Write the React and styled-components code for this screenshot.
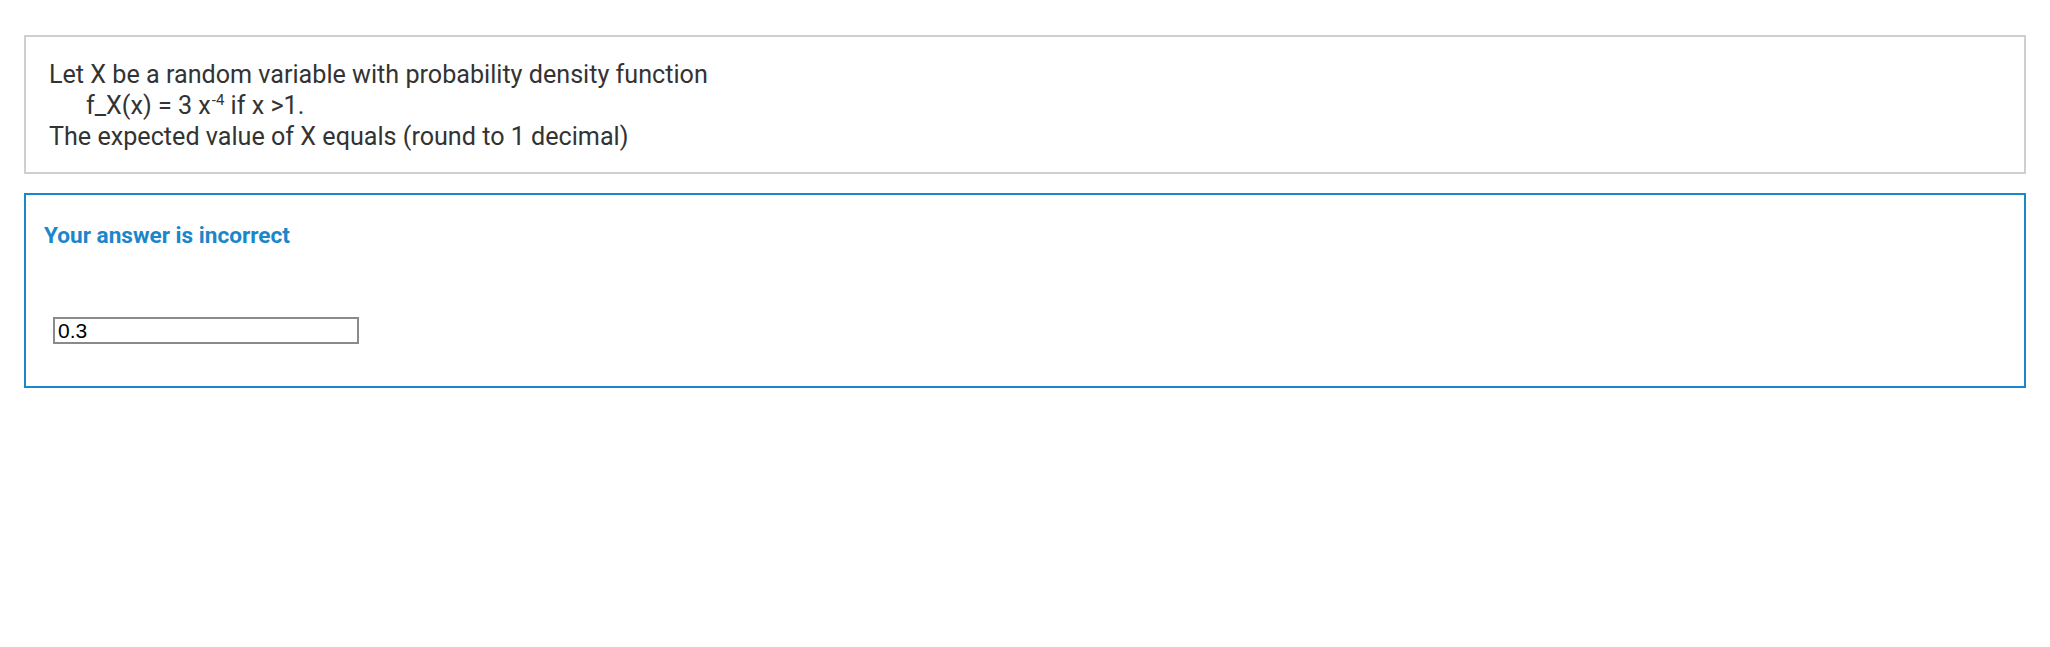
import React from "react";
import styled, { createGlobalStyle } from "styled-components";

const Global = createGlobalStyle`
  html, body { margin: 0; padding: 0; background: #fff; }
  body { font-family: Roboto, "Noto Sans", Arial, sans-serif; }
`;

const Page = styled.main`
  padding: 35px 24px 0 24px;
  display: flex;
  flex-direction: column;
  gap: 19px;
`;

const QuestionCard = styled.section`
  border: 2px solid #cfcfcb;
  padding: 22px 24px 20px 23px;
  color: #333;
  font-size: 25.15px;
  line-height: 31px;
`;

const Line = styled.div`
  padding-left: ${(p) => (p.$indent ? "37px" : "0")};
`;

const Sup = styled.sup`
  font-size: 15px;
  line-height: 0;
  vertical-align: 9px;
  margin-left: 1px;
`;

const FeedbackCard = styled.section`
  border: 2px solid #1b86c9;
  padding: 28px 18px 42px 18px;
  display: flex;
  flex-direction: column;
  align-items: flex-start;
`;

const FeedbackTitle = styled.h3`
  margin: 0;
  color: #1b86c9;
  font-size: 22.6px;
  font-weight: 700;
  line-height: 26px;
`;

const AnswerInput = styled.input`
  margin: 68px 0 0 9px;
  box-sizing: border-box;
  width: 306px;
  height: 27px;
  border: 2px solid #8a8a8a;
  padding: 0 3px;
  font-family: "Liberation Sans", Arial, sans-serif;
  font-size: 21px;
  color: #000;
  background: #fff;
  outline: none;
`;

export default function App() {
  return (
    <>
      <Global />
      <Page>
        <QuestionCard>
          <Line>Let X be a random variable with probability density function</Line>
          <Line $indent>
            f_X(x) = 3 x<Sup>-4</Sup> if x &gt;1.
          </Line>
          <Line>The expected value of X equals (round to 1 decimal)</Line>
        </QuestionCard>
        <FeedbackCard>
          <FeedbackTitle>Your answer is incorrect</FeedbackTitle>
          <AnswerInput type="text" defaultValue="0.3" readOnly />
        </FeedbackCard>
      </Page>
    </>
  );
}
